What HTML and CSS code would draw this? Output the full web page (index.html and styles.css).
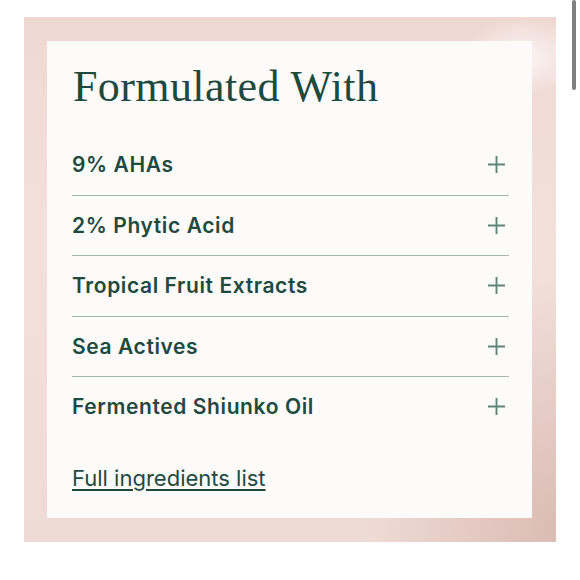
FILE: index.html
```html
<!DOCTYPE html>
<html lang="en">
<head>
<meta charset="utf-8">
<title>Formulated With</title>
<link rel="stylesheet" href="styles.css">
</head>
<body>
<div class="frame">
  <section class="card">
    <h2 class="title">Formulated With</h2>
    <ul class="list">
      <li class="row"><span class="label">9% AHAs</span><svg class="plus" viewBox="0 0 18 18"><path d="M9 0V18M0 9H18"/></svg></li>
      <li class="row"><span class="label">2% Phytic Acid</span><svg class="plus" viewBox="0 0 18 18"><path d="M9 0V18M0 9H18"/></svg></li>
      <li class="row"><span class="label">Tropical Fruit Extracts</span><svg class="plus" viewBox="0 0 18 18"><path d="M9 0V18M0 9H18"/></svg></li>
      <li class="row"><span class="label">Sea Actives</span><svg class="plus" viewBox="0 0 18 18"><path d="M9 0V18M0 9H18"/></svg></li>
      <li class="row"><span class="label">Fermented Shiunko Oil</span><svg class="plus" viewBox="0 0 18 18"><path d="M9 0V18M0 9H18"/></svg></li>
    </ul>
    <a class="link" href="#">Full ingredients list</a>
  </section>
</div>
<div class="scrollbar"></div>
</body>
</html>
```
FILE: styles.css
```css
html, body {
  margin: 0;
  padding: 0;
  background: #ffffff;
}
body {
  width: 580px;
  height: 580px;
  overflow: hidden;
  position: relative;
}
.frame {
  box-sizing: border-box;
  margin: 17px 0 0 24px;
  width: 532px;
  height: 525px;
  padding: 24px 24px 24px 23px;
  background:
    radial-gradient(ellipse 60px 40px at 500px 40px, rgba(255,255,255,0.75), rgba(255,255,255,0) 100%),
    radial-gradient(ellipse 200px 260px at 540px 520px, rgba(200,160,150,0.55), rgba(200,160,150,0) 100%),
    linear-gradient(180deg, #efd8d2 0%, #f2e0db 40%, #efdbd5 100%);
}
.card {
  box-sizing: border-box;
  width: 485px;
  height: 477px;
  background: #fdfafa;
  padding: 24px 23px 0 25px;
  display: flex;
  flex-direction: column;
}
.title {
  margin: 0 0 26px 1px;
  font-family: "Liberation Serif", serif;
  font-weight: 400;
  font-size: 44px;
  line-height: 44px;
  color: #1c4a3d;
  letter-spacing: 0.4px;
}
.list {
  list-style: none;
  margin: 0;
  padding: 0;
}
.row {
  height: 59.5px;
  display: flex;
  align-items: center;
  justify-content: space-between;
  border-bottom: 1px solid #a2b8b2;
}
.row:last-child {
  border-bottom: none;
}
.label {
  font-family: "Inter", sans-serif;
  font-weight: 600;
  font-size: 21px;
  color: #1e4a3f;
  letter-spacing: 0.6px;
}
.plus {
  width: 17px;
  height: 17px;
  margin-right: 4px;
  stroke: #5f857b;
  stroke-width: 2;
  fill: none;
}
.link {
  margin-top: 28px;
  align-self: flex-start;
  font-family: "Inter", sans-serif;
  font-weight: 400;
  font-size: 22px;
  color: #1e4a3f;
  text-decoration: underline;
  text-decoration-thickness: 1.5px;
  text-underline-offset: 3px;
}
.scrollbar {
  position: absolute;
  left: 572px;
  top: 0;
  width: 4px;
  height: 90px;
  border-radius: 2px;
  background: #7f7f7f;
}
```
